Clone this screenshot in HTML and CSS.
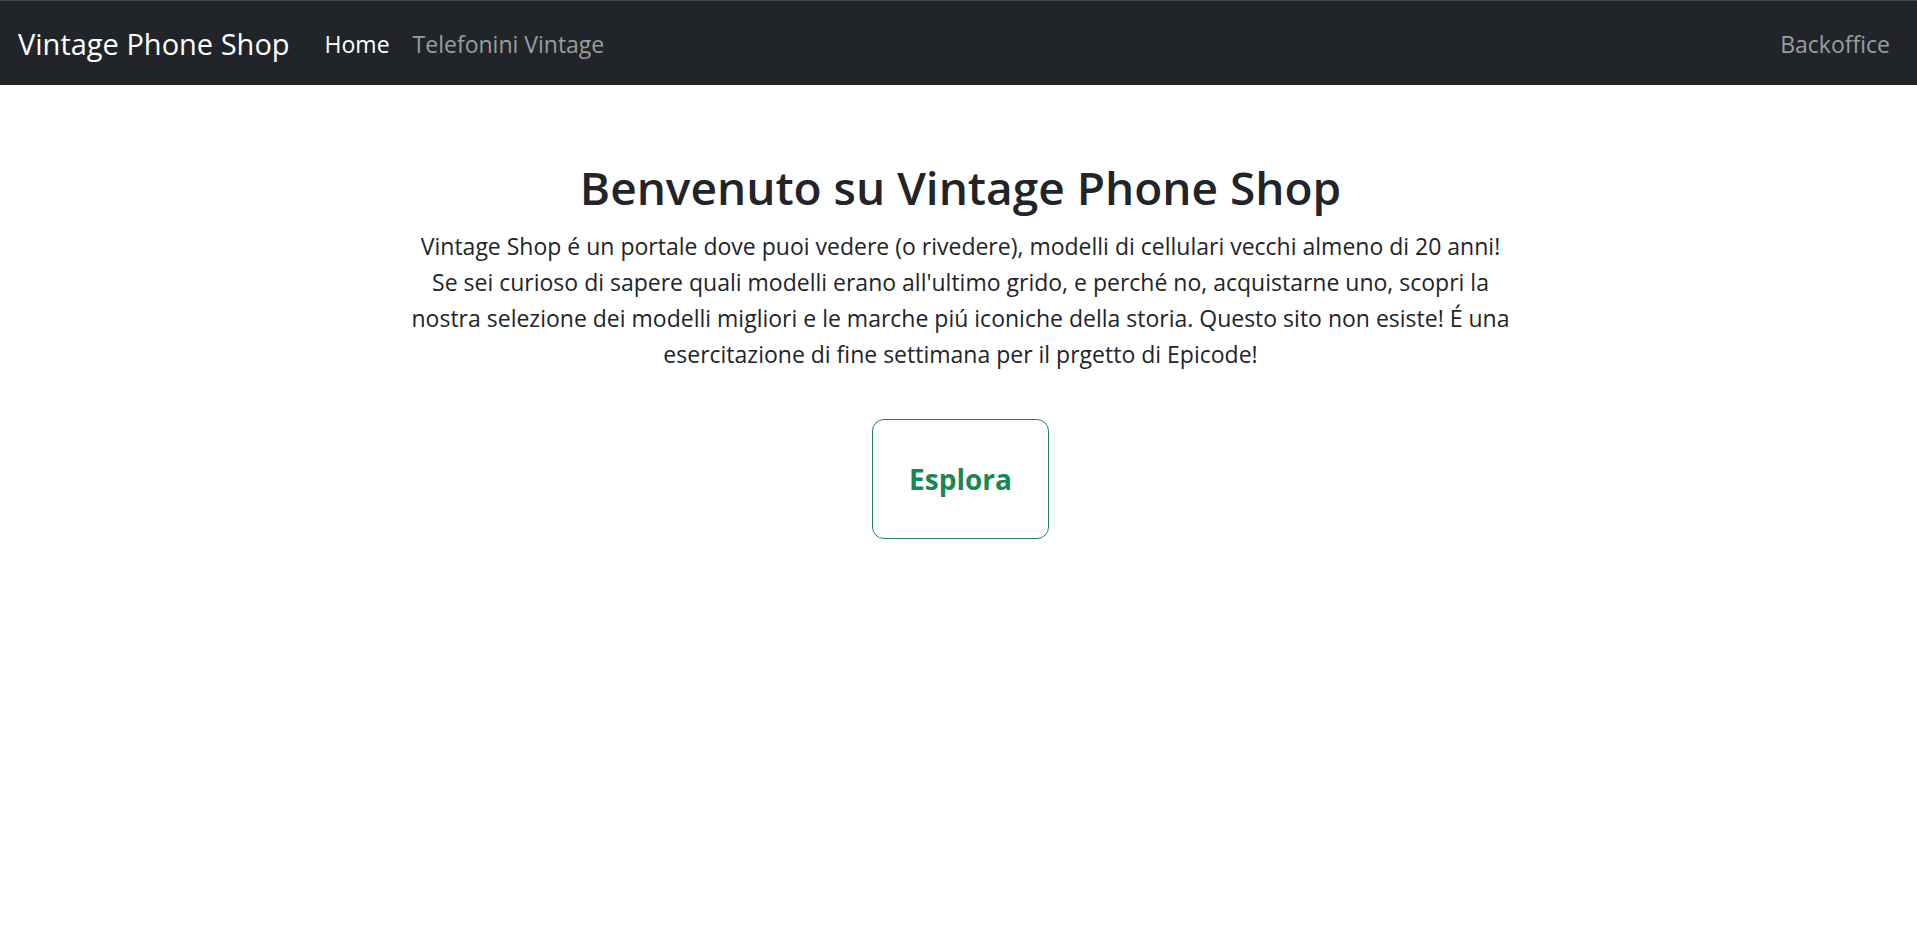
FILE: index.html
```html
<!DOCTYPE html>
<html lang="it">
<head>
  <meta charset="utf-8">
  <meta name="viewport" content="width=device-width, initial-scale=1">
  <title>Vintage Phone Shop</title>
  <link rel="stylesheet" href="styles.css">
</head>
<body>
  <nav class="navbar">
    <a class="navbar-brand" href="#">Vintage Phone Shop</a>
    <a class="nav-link active" href="#" aria-current="page">Home</a>
    <a class="nav-link" href="#">Telefonini Vintage</a>
    <a class="nav-link nav-link-end" href="#">Backoffice</a>
  </nav>
  <main class="hero">
    <h1 class="hero-title">Benvenuto su Vintage Phone Shop</h1>
    <p class="hero-text">Vintage Shop é un portale dove puoi vedere (o rivedere), modelli di cellulari vecchi almeno di 20 anni! Se sei curioso di sapere quali modelli erano all'ultimo grido, e perché no, acquistarne uno, scopri la nostra selezione dei modelli migliori e le marche piú iconiche della storia. Questo sito non esiste! É una esercitazione di fine settimana per il prgetto di Epicode!</p>
    <button class="explore-button" type="button">Esplora</button>
  </main>
</body>
</html>
```
FILE: styles.css
```css
* {
  box-sizing: border-box;
}

body {
  margin: 0;
  background: #fff;
  color: #212529;
  font-family: "Segoe UI", "Open Sans", "Noto Sans", sans-serif;
  font-size: 23px;
  line-height: 36px;
}

.navbar {
  display: flex;
  align-items: center;
  padding: 13px 18px 11px;
  border-top: 1px solid #424649;
  background: #212529;
}

.navbar-brand {
  margin-right: 23px;
  padding: 8px 0;
  color: #fff;
  font-size: 29px;
  line-height: 44px;
  text-decoration: none;
}

.nav-link {
  padding: 12px 11px 12px 12px;
  color: #9b9d9e;
  text-decoration: none;
}

.nav-link.active {
  color: #fff;
}

.nav-link-end {
  margin-left: auto;
  padding-right: 9px;
}

.hero {
  display: flex;
  flex-direction: column;
  align-items: center;
  max-width: 1148px;
  margin: 0 auto;
  padding: 73px 22px 72px 26px;
  text-align: center;
}

.hero-title {
  margin: 0 0 12px;
  font-size: 46px;
  font-weight: 600;
  line-height: 58px;
}

.hero-text {
  margin: 0 0 47px;
}

.explore-button {
  padding: 36px;
  border: 1px solid #198754;
  border-radius: 12px;
  background: transparent;
  color: #198754;
  font: inherit;
  font-size: 28px;
  font-weight: 700;
  line-height: 46px;
}
```
